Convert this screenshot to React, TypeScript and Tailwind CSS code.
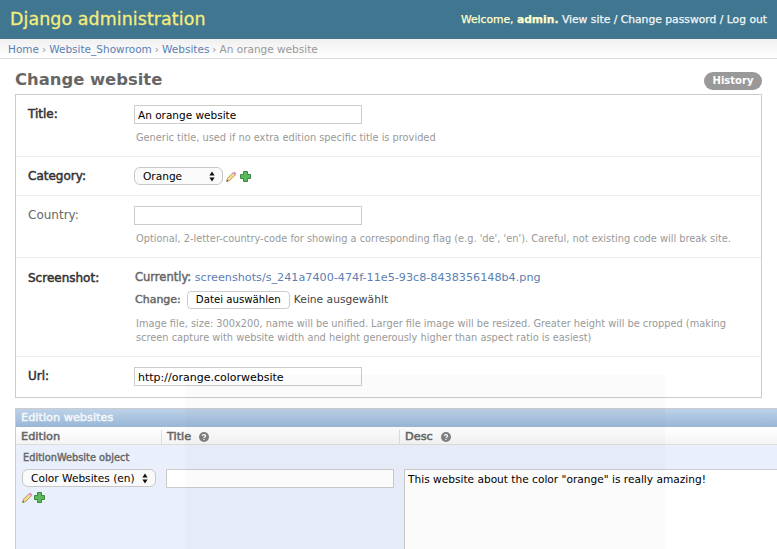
import React from "react";

const Pencil = () => (
  <svg width="11" height="11" viewBox="0 0 11 11" className="shrink-0">
    <path d="M0.6 10.4 L1.4 7.4 L7.2 1.6 L9.4 3.8 L3.6 9.6 Z" fill="#f6dc84" stroke="#8c7a4c" strokeWidth="0.7" />
    <path d="M6.9 1.9 L8.3 0.5 L10.5 2.7 L9.1 4.1 Z" fill="#ea84dc" />
    <path d="M0.6 10.4 L1 8.9 L2.1 10 Z" fill="#222" />
  </svg>
);

const Plus = () => (
  <svg width="11" height="11" viewBox="0 0 11 11" className="shrink-0">
    <path d="M3.5 0.5 H7.5 V3.5 H10.5 V7.5 H7.5 V10.5 H3.5 V7.5 H0.5 V3.5 H3.5 Z" fill="#5cb85c" stroke="#3c8a3c" strokeWidth="1" />
  </svg>
);

const Help = () => (
  <svg width="10" height="10" viewBox="0 0 10 10" className="ml-[8px] shrink-0">
    <circle cx="5" cy="5" r="5" fill="#808080" />
    <path d="M3.4 3.9 C3.4 2.2 6.6 2.2 6.6 3.9 C6.6 5 5 4.9 5 6" fill="none" stroke="#fff" strokeWidth="1.2" />
    <rect x="4.4" y="6.8" width="1.2" height="1.2" fill="#fff" />
  </svg>
);

const Updown = () => (
  <svg width="6" height="11" viewBox="0 0 6 11" className="shrink-0">
    <path d="M3 0.5 L5.6 4.5 H0.4 Z M3 10.5 L0.4 6.5 H5.6 Z" fill="#111" />
  </svg>
);

const Select = ({ label, className }: { label: string; className: string }) => (
  <div className={`flex h-[18px] items-center justify-between rounded-[6px] border border-[#c8c8c8] bg-[#fafafa] pl-[8px] pr-[7px] text-[10.6px] text-black ${className}`}>
    <span className="pt-[2px]">{label}</span>
    <Updown />
  </div>
);

const Field = ({ value, className = "" }: { value: string; className?: string }) => (
  <input
    readOnly
    value={value}
    className={`block h-[19px] w-[228px] border border-[#ccc] bg-white px-[3px] pt-[1px] text-black outline-none ${className}`}
  />
);

const Row = ({ label, strong = true, className, labelClass = "mt-[1px]", children }: { label: string; strong?: boolean; className: string; labelClass?: string; children: React.ReactNode }) => (
  <div className={`flex border-b border-[#eee] pl-[12px] last:border-b-0 ${className}`}>
    <div className={`w-[106px] shrink-0 text-[12px] leading-[16px] ${labelClass} ${strong ? "text-[#333] [-webkit-text-stroke:0.5px]" : "text-[#666]"}`}>{label}</div>
    <div className="min-w-0 flex-1">{children}</div>
  </div>
);

const Hint = ({ children, className = "" }: { children: React.ReactNode; className?: string }) => (
  <p className={`pl-[2px] text-[9.8px] leading-[14px] text-[#999] ${className}`}>{children}</p>
);

export default function App() {
  return (
    <div className="relative h-[549px] w-[777px] overflow-hidden bg-white font-['DejaVu_Sans','Liberation_Sans',sans-serif]">
      <header className="flex h-[39px] items-center justify-between bg-[#417690] pl-[10px] pr-[10px]">
        <div className="text-[17.4px] tracking-[0.1px] text-[#f5ee7a] [-webkit-text-stroke:0.3px]">Django administration</div>
        <div className="pt-[1px] text-[10.75px] [-webkit-text-stroke:0.25px]">
          <span className="text-[#ffc]">Welcome, <span className="font-bold">admin.</span></span>{" "}
          <span className="text-[#f0f6f8]">View site / Change password / Log out</span>
        </div>
      </header>

      <nav className="flex h-[20px] items-center gap-[3px] border-b border-[#ddd] bg-gradient-to-b from-[#f0f0f0] to-white pl-[8px] pt-[3px] text-[10.5px] text-[#999]">
        <span className="text-[#5b80b2]">Home</span> ›
        <span className="text-[#5b80b2]">Website_Showroom</span> ›
        <span className="text-[#5b80b2]">Websites</span> ›
        <span>An orange website</span>
      </nav>

      <main className="px-[15px]">
        <div className="flex h-[35px] items-center justify-between">
          <h1 className="pt-[8px] text-[16.4px] font-bold text-[#666]">Change website</h1>
          <a className="mt-[8px] flex h-[18px] w-[58px] items-center justify-center rounded-[9px] bg-[#999] text-[10px] font-bold text-white">History</a>
        </div>

        <section className="w-[747px] border border-[#ccc]">
          <Row label="Title:" className="h-[62px] pt-[10px]">
            <Field value="An orange website" className="text-[10.5px]" />
            <Hint className="mt-[7px]">Generic title, used if no extra edition specific title is provided</Hint>
          </Row>
          <Row label="Category:" className="h-[39px] pt-[10px]">
            <div className="flex items-center">
              <Select label="Orange" className="w-[89px]" />
              <span className="ml-[3px]"><Pencil /></span>
              <span className="ml-[3px]"><Plus /></span>
            </div>
          </Row>
          <Row label="Country:" strong={false} className="h-[62px] pt-[10px]">
            <Field value="" className="text-[11px]" />
            <Hint className="mt-[7px]">Optional, 2-letter-country-code for showing a corresponding flag (e.g. 'de', 'en'). Careful, not existing code will break site.</Hint>
          </Row>
          <Row label="Screenshot:" labelClass="" className="h-[99px] pt-[12px]">
            <div className="pl-[1px] text-[11px] leading-[14px] text-[#666]">
              <span className="text-[11.5px] [-webkit-text-stroke:0.45px]">Currently:</span> <span className="text-[11.2px] text-[#5b80b2]">screenshots/s_241a7400-474f-11e5-93c8-8438356148b4.png</span>
            </div>
            <div className="mt-[6px] flex items-center pl-[1px] text-[11px] text-[#666]">
              <span className="[-webkit-text-stroke:0.45px]">Change:</span>
              <span className="ml-[6px] flex h-[18px] w-[103px] items-center justify-center rounded-[4px] border border-[#ccc] bg-white text-[10.2px] text-black">Datei auswählen</span>
              <span className="ml-[4px] text-[10.7px] text-[#444]">Keine ausgewählt</span>
            </div>
            <Hint className="mt-[8px] w-[600px]">Image file, size: 300x200, name will be unified. Larger file image will be resized. Greater height will be cropped (making screen capture with website width and height generously higher than aspect ratio is easiest)</Hint>
          </Row>
          <Row label="Url:" labelClass="mt-[1px]" className="h-[40px] pt-[10px]">
            <Field value="http://orange.colorwebsite" className="text-[11px]" />
          </Row>
        </section>

        <section className="mt-[10px] w-[780px] border-l border-t border-[#ccc]">
          <h2 className="flex h-[18px] items-center bg-gradient-to-b from-[#bcd2e9] to-[#99b6d6] pl-[5px] pt-[1px] text-[11.3px] text-[#f4f7fb] [-webkit-text-stroke:0.5px]">Edition websites</h2>
          <div className="flex h-[18px] border-b border-[#ddd] bg-gradient-to-b from-white to-[#f4f4f4] pt-[3px] text-[11.3px] text-[#666]">
            <div className="flex w-[146px] items-center border-r border-[#ddd] pl-[5px]"><span className="[-webkit-text-stroke:0.5px]">Edition</span></div>
            <div className="flex w-[238px] items-center border-r border-[#ddd] pl-[5px]"><span className="[-webkit-text-stroke:0.5px]">Title</span><Help /></div>
            <div className="flex flex-1 items-center pl-[5px]"><span className="[-webkit-text-stroke:0.5px]">Desc</span><Help /></div>
          </div>
          <div className="h-[110px] bg-[#e9f0fb]">
            <div className="pl-[7px] pt-[6px] text-[9.8px] leading-[14px] text-[#666] [-webkit-text-stroke:0.4px]">EditionWebsite object</div>
            <div className="mt-[4px] flex items-start pl-[6px]">
              <div className="w-[134px] shrink-0">
                <Select label="Color Websites (en)" className="w-[134px]" />
                <div className="mt-[5px] flex items-center gap-[1px]"><Pencil /><Plus /></div>
              </div>
              <Field value="" className="ml-[10px] text-[11px]" />
              <textarea
                readOnly
                value={'This website about the color "orange" is really amazing!'}
                className="ml-[10px] h-[120px] w-[390px] resize-none border border-[#ccc] bg-white px-[3px] py-[1px] text-[10.6px] leading-[16px] text-black outline-none"
              />
            </div>
          </div>
        </section>
      </main>

      <div className="pointer-events-none absolute left-[185px] top-[375px] h-[174px] w-[480px] bg-black/[0.015]" />
    </div>
  );
}
